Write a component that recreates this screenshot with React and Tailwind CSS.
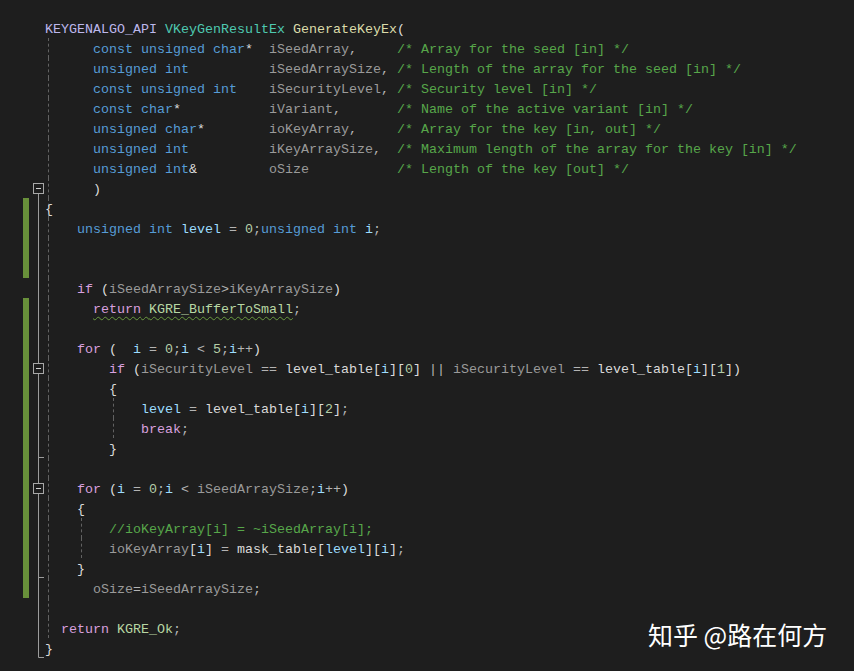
import React from "react";

const C = {
  mac: "text-[#bdb7ec]",
  typ: "text-[#4ec9b0]",
  fn: "text-[#dcdcaa]",
  kw: "text-[#569cd6]",
  par: "text-[#9a9a9a]",
  cm: "text-[#57a64a]",
  ctl: "text-[#d8a0df]",
  loc: "text-[#9cdcfe]",
  en: "text-[#b8d7a3]",
  num: "text-[#b5cea8]",
  gl: "text-[#dadada]",
  op: "text-[#b4b4b4]",
  pl: "text-[#dcdcdc]",
};

const GUIDE_LEFT = { 3: "left-[3px]", 36: "left-[36px]", 68: "left-[68px]" };

// [color, text] pairs; "sq" wraps squiggle-underlined segments
const param = (type, typePad, name, namePad, comment) => [
  [C.pl, "      "],
  ...type,
  [C.pl, " ".repeat(typePad)],
  [C.par, name],
  [C.op, namePad.comma ? "," : ""],
  [C.pl, " ".repeat(namePad.n)],
  [C.cm, comment],
];

const rows = [
  { code: [[C.mac, "KEYGENALGO_API"], [C.pl, " "], [C.typ, "VKeyGenResultEx"], [C.pl, " "], [C.fn, "GenerateKeyEx"], [C.pl, "("]] },
  { guides: [3], code: param([[C.kw, "const unsigned char"], [C.pl, "*"]], 2, "iSeedArray", { comma: true, n: 5 }, "/* Array for the seed [in] */") },
  { guides: [3], code: param([[C.kw, "unsigned int"]], 10, "iSeedArraySize", { comma: true, n: 1 }, "/* Length of the array for the seed [in] */") },
  { guides: [3], code: param([[C.kw, "const unsigned int"]], 4, "iSecurityLevel", { comma: true, n: 1 }, "/* Security level [in] */") },
  { guides: [3], code: param([[C.kw, "const char"], [C.pl, "*"]], 11, "iVariant", { comma: true, n: 7 }, "/* Name of the active variant [in] */") },
  { guides: [3], code: param([[C.kw, "unsigned char"], [C.pl, "*"]], 8, "ioKeyArray", { comma: true, n: 5 }, "/* Array for the key [in, out] */") },
  { guides: [3], code: param([[C.kw, "unsigned int"]], 10, "iKeyArraySize", { comma: true, n: 2 }, "/* Maximum length of the array for the key [in] */") },
  { guides: [3], code: param([[C.kw, "unsigned int"], [C.pl, "&"]], 9, "oSize", { comma: false, n: 11 }, "/* Length of the key [out] */") },
  { guides: [3], fold: "boxTop", code: [[C.pl, "      )"]] },
  { guides: [3], fold: "line", change: true, code: [[C.pl, "{"]] },
  {
    guides: [3], fold: "line", change: true,
    code: [[C.pl, "    "], [C.kw, "unsigned int"], [C.pl, " "], [C.loc, "level"], [C.op, " = "], [C.num, "0"], [C.op, ";"], [C.kw, "unsigned int"], [C.pl, " "], [C.loc, "i"], [C.op, ";"]],
  },
  { guides: [3], fold: "line", change: true, code: [] },
  { guides: [3], fold: "line", change: true, code: [] },
  {
    guides: [3], fold: "line",
    code: [[C.pl, "    "], [C.ctl, "if"], [C.pl, " ("], [C.par, "iSeedArraySize"], [C.op, ">"], [C.par, "iKeyArraySize"], [C.pl, ")"]],
  },
  {
    guides: [3], fold: "line", change: true,
    code: [[C.pl, "      "], ["sq", [[C.ctl, "return"], [C.pl, " "], [C.en, "KGRE_BufferToSmall"]]], [C.op, ";"]],
  },
  { guides: [3], fold: "line", change: true, code: [] },
  {
    guides: [3], fold: "line", change: true,
    code: [[C.pl, "    "], [C.ctl, "for"], [C.pl, " (  "], [C.loc, "i"], [C.op, " = "], [C.num, "0"], [C.op, ";"], [C.loc, "i"], [C.op, " < "], [C.num, "5"], [C.op, ";"], [C.loc, "i"], [C.op, "++"], [C.pl, ")"]],
  },
  {
    guides: [3], fold: "boxMid", change: true,
    code: [
      [C.pl, "        "], [C.ctl, "if"], [C.pl, " ("], [C.par, "iSecurityLevel"], [C.op, " == "], [C.gl, "level_table"], [C.pl, "["], [C.loc, "i"], [C.pl, "]["], [C.num, "0"], [C.pl, "]"],
      [C.op, " || "], [C.par, "iSecurityLevel"], [C.op, " == "], [C.gl, "level_table"], [C.pl, "["], [C.loc, "i"], [C.pl, "]["], [C.num, "1"], [C.pl, "])"],
    ],
  },
  { guides: [3], fold: "line", change: true, code: [[C.pl, "        {"]] },
  {
    guides: [3, 68], fold: "line", change: true,
    code: [[C.pl, "            "], [C.loc, "level"], [C.op, " = "], [C.gl, "level_table"], [C.pl, "["], [C.loc, "i"], [C.pl, "]["], [C.num, "2"], [C.pl, "]"], [C.op, ";"]],
  },
  { guides: [3, 68], fold: "line", change: true, code: [[C.pl, "            "], [C.ctl, "break"], [C.op, ";"]] },
  { guides: [3], fold: "endMid", change: true, code: [[C.pl, "        }"]] },
  { guides: [3], fold: "line", change: true, code: [] },
  {
    guides: [3], fold: "boxMid", change: true,
    code: [[C.pl, "    "], [C.ctl, "for"], [C.pl, " ("], [C.loc, "i"], [C.op, " = "], [C.num, "0"], [C.op, ";"], [C.loc, "i"], [C.op, " < "], [C.par, "iSeedArraySize"], [C.op, ";"], [C.loc, "i"], [C.op, "++"], [C.pl, ")"]],
  },
  { guides: [3], fold: "line", change: true, code: [[C.pl, "    {"]] },
  { guides: [3, 36], fold: "line", change: true, code: [[C.pl, "        "], [C.cm, "//ioKeyArray[i] = ~iSeedArray[i];"]] },
  {
    guides: [3, 36], fold: "line", change: true,
    code: [[C.pl, "        "], [C.par, "ioKeyArray"], [C.pl, "["], [C.loc, "i"], [C.pl, "]"], [C.op, " = "], [C.gl, "mask_table"], [C.pl, "["], [C.loc, "level"], [C.pl, "]["], [C.loc, "i"], [C.pl, "]"], [C.op, ";"]],
  },
  { guides: [3], fold: "endMid", change: true, code: [[C.pl, "    }"]] },
  { guides: [3], fold: "line", change: true, code: [[C.pl, "      "], [C.par, "oSize"], [C.op, "="], [C.par, "iSeedArraySize"], [C.op, ";"]] },
  { guides: [3], fold: "line", code: [] },
  { guides: [3], fold: "line", code: [[C.pl, "  "], [C.ctl, "return"], [C.pl, " "], [C.en, "KGRE_Ok"], [C.op, ";"]] },
  { fold: "endLast", code: [[C.pl, "}"]] },
];

const Fold = ({ kind }) => {
  const stroke = "#9c9c9c";
  return (
    <svg width="11" height="20" viewBox="0 0 11 20" className="block">
      {(kind === "line" || kind === "boxMid") && <line x1="5.5" y1="0" x2="5.5" y2={kind === "line" ? 20 : 5} stroke={stroke} />}
      {(kind === "boxTop" || kind === "boxMid") && (
        <>
          <rect x="0.5" y="5.5" width="10" height="10" fill="#1e1e1e" stroke="#a8a8a8" />
          <line x1="3" y1="10.5" x2="8" y2="10.5" stroke="#d0d0d0" />
          <line x1="5.5" y1="16" x2="5.5" y2="20" stroke={stroke} />
        </>
      )}
      {(kind === "endMid" || kind === "endLast") && (
        <>
          <line x1="5.5" y1="0" x2="5.5" y2={kind === "endMid" ? 20 : 19.5} stroke={stroke} />
          <line x1="5.5" y1="19.5" x2="11" y2="19.5" stroke={stroke} />
        </>
      )}
    </svg>
  );
};

const Seg = ({ seg }) => {
  if (seg[0] === "sq") {
    return (
      <span className="underline decoration-wavy decoration-[#6a9a40] underline-offset-[3px] decoration-1">
        {seg[1].map((s, i) => (
          <Seg key={i} seg={s} />
        ))}
      </span>
    );
  }
  return <span className={seg[0]}>{seg[1]}</span>;
};

const Row = ({ row }) => (
  <div className="flex h-5">
    <div className="flex w-[45px] shrink-0">
      <div className="w-[23px]" />
      <div className={`w-[6px] h-full ${row.change ? "bg-[#68903a]" : ""}`} />
      <div className="w-[4px]" />
      <div className="w-[11px]">{row.fold && <Fold kind={row.fold} />}</div>
    </div>
    <div className="relative flex-1 whitespace-pre leading-5">
      {(row.guides || []).map((g) => (
        <span key={g} className={`absolute top-0 bottom-0 ${GUIDE_LEFT[g]} border-l border-dashed border-[#626262]`} />
      ))}
      <span className="relative top-[2px]">
        {row.code.map((seg, i) => (
          <Seg key={i} seg={seg} />
        ))}
      </span>
    </div>
  </div>
);

export default function App() {
  return (
    <div className="relative w-[854px] h-[671px] overflow-hidden bg-[#1e1e1e] pt-[18px] font-['Liberation_Mono',monospace] text-[13.333px]">
      {rows.map((row, i) => (
        <Row key={i} row={row} />
      ))}

      {/* watermark */}
      <div className="absolute left-[648px] top-[618px] leading-[32px] text-[25px] text-white font-['Noto_Sans_CJK_SC',sans-serif] whitespace-nowrap">
        知乎 @路在何方
      </div>
    </div>
  );
}
